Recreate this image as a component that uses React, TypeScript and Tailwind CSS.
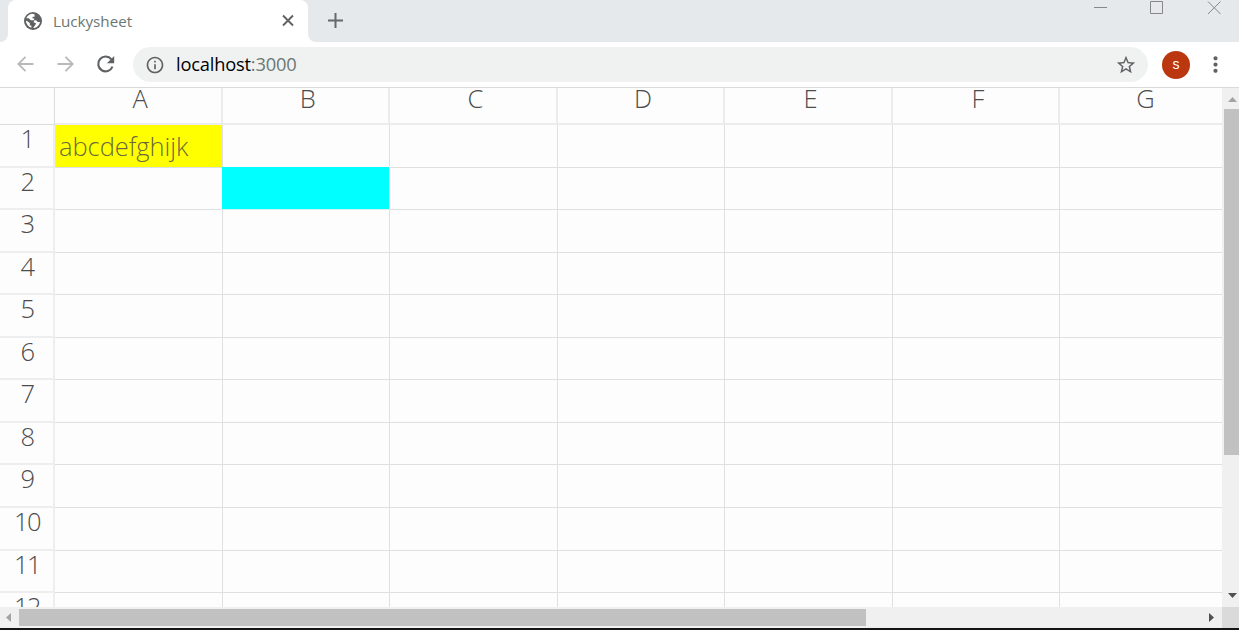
import { MdInfoOutline, MdMoreVert, MdStarBorder } from 'react-icons/md';

const columns = ['A', 'B', 'C', 'D', 'E', 'F', 'G'];
const rowHeights = [43, 42, 43, 42, 43, 42, 43, 42, 43, 43, 42, 43];
const cells: Record<string, { text?: string; className: string }> = {
  A1: { text: 'abcdefghijk', className: 'w-[167.55px] border-[#e0e0e0] bg-[#ffff00] text-[#4c4c4c]/85' },
  B2: { className: '-ml-px -mt-px w-[168.55px] border-[#d0f4f4] bg-[#00ffff]' }
};

const TitleBar = () => (
  <div className="flex h-[42px] shrink-0 justify-between bg-[#e5e9ec]">
    <div className="flex">
      <div className="w-2 bg-white">
        <div className="h-full rounded-br-lg bg-[#e5e9ec]" />
      </div>
      <div className="flex w-[300px] items-center rounded-t-lg bg-white pl-4 pr-[13px]">
        <svg className="size-[18px]" viewBox="0 0 18 18">
          <circle cx="9" cy="9" r="9" fill="#5f6163" />
          <path
            d="M7.200 1.900C5 2.400 3.100 4 2.300 6.300h2.500l2 2h3.400V6.500h-1.600V4.800h2V2.400c-1-.5-2.200-.7-3.400-.5z"
            fill="#fff"
          />
          <path
            d="M1.900 8.800c.2 3.200 2.500 6 5.500 6.900v-2.200H5.800v-2.600L2.900 8.900zM10.500 8.300l2 .2 1.200 1.500h2.300c-.4 3-2.600 5.300-5.500 5.900l-1.300-.3 1.600-1.800 1.300-2.200-2.500-1.300z"
            fill="#fff"
          />
        </svg>
        <span className="ml-[11px] flex-1 text-[15.2px] text-[#6b7773]">Luckysheet</span>
        <svg className="size-[14px]" viewBox="0 0 14 14" stroke="#5f6163" strokeWidth="1.9">
          <path d="M2 1.500l10 10M12 1.500L2 11.500" />
        </svg>
      </div>
      <div className="w-2 bg-white">
        <div className="h-full rounded-bl-lg bg-[#e5e9ec]" />
      </div>
      <svg className="ml-[11px] mt-[12px] size-[17px]" viewBox="0 0 17 17" stroke="#66696b" strokeWidth="2">
        <path d="M1 8.5h15M8.5 1v15" />
      </svg>
    </div>
    <div className="flex pr-[17px] pt-px">
      <svg className="size-[15px]" viewBox="0 0 15 15" stroke="#858789">
        <path d="M1 6.5h13" />
      </svg>
      <svg className="ml-[41px] size-[14px]" viewBox="0 0 14 14" fill="none" stroke="#858789">
        <path d="M1.5.5h12v12h-12z" />
      </svg>
      <svg className="ml-[44px] size-[15px]" viewBox="0 0 15 15" stroke="#858789">
        <path d="M1 .5l12.500 12.500M13.500 .5L1 13" />
      </svg>
    </div>
  </div>
);

const AddressBar = () => (
  <div className="flex h-[45px] shrink-0 items-center bg-white pl-[17px] text-[#5f6163]">
    <svg className="size-[17px]" viewBox="0 0 17 17" fill="none" stroke="#b9b9b9" strokeWidth="1.800">
      <path d="M16.500 8H1.500M8.500 .8L1.300 8l7.200 7.200" />
    </svg>
    <svg className="ml-[23px] size-[17px]" viewBox="0 0 17 17" fill="none" stroke="#b9b9b9" strokeWidth="1.800">
      <path d="M.5 8h15M8.500 .8L15.700 8l-7.200 7.200" />
    </svg>
    <svg className="ml-[22px] size-[19px]" viewBox="0 0 19 19">
      <path d="M15.400 4.300A7.400 7.400 0 1 0 16.500 11.700" fill="none" stroke="#5f6163" strokeWidth="2.100" />
      <path d="M18.200 1v7.300h-7.300z" fill="#5f6163" />
    </svg>
    <div className="ml-[18px] flex h-[35px] flex-1 items-center rounded-full bg-[#f0f2f2] pl-[12px] pr-[11px]">
      <MdInfoOutline className="size-[20px]" />
      <span className="ml-[11px] flex-1 pb-[2px] text-[18.3px] tracking-[-0.2px] text-black">
        localhost<span className="text-[#6b7773]">:3000</span>
      </span>
      <MdStarBorder className="size-[22px]" />
    </div>
    <div className="ml-[14px] flex size-[28px] items-center justify-center rounded-full bg-[#ba370f] font-['Liberation_Sans'] text-[14px] text-white">
      s
    </div>
    <MdMoreVert className="ml-[13px] mr-[11px] size-[25px]" />
  </div>
);

const Sheet = () => (
  <div className="flex-1 overflow-hidden bg-[#fdfdfd] text-[25.5px] font-light text-[#4c4c4c]">
    <div className="flex h-[37px] w-[1230px]">
      <div className="w-[55px] shrink-0 border-b border-r border-[#dcdcdc]" />
      {columns.map((col) => (
        <div key={col} className="flex w-[167.55px] shrink-0 justify-center border-b-2 border-r-2 border-[#ececec] leading-[21px]">
          <span className="ml-[5px]">{col}</span>
        </div>
      ))}
    </div>
    {rowHeights.map((height, i) => (
      <div key={i} className="flex w-[1230px]" style={{ height }}>
        <div className="w-[55px] shrink-0 border-b-2 border-r-2 border-[#eeeeee] pl-px text-center leading-[27px] tracking-[-1.5px]">
          {i + 1}
        </div>
        {columns.map((col) => {
          const cell = cells[`${col}${i + 1}`];
          return (
            <div
              key={col}
              className={`shrink-0 border-b border-r pl-1 leading-[43px] tracking-[-0.05px] ${cell ? cell.className : 'w-[167.55px] border-[#e0e0e0]'}`}
            >
              {cell?.text}
            </div>
          );
        })}
      </div>
    ))}
  </div>
);

const App = () => {
  return (
    <div className="flex h-[630px] w-[1239px] flex-col overflow-hidden border-b-2 border-[#151314] bg-white font-['Open_Sans',sans-serif]">
      <TitleBar />
      <AddressBar />
      <div className="flex min-h-0 flex-1 border-t border-[#dadada]">
        <Sheet />
        <div className="flex w-[17px] shrink-0 flex-col items-center bg-[#f0f0f0]">
          <svg className="ml-[3px] mt-[9px] h-[5px] w-[9px]" viewBox="0 0 9 5" fill="#a3a3a3">
            <path d="M0 5l4.5-5L9 5z" />
          </svg>
          <div className="mt-[7px] h-[346px] w-[15px] self-end bg-[#c1c1c1]" />
          <svg className="mb-[9px] ml-[3px] mt-auto h-[5px] w-[9px]" viewBox="0 0 9 5" fill="#505050">
            <path d="M0 0h9L4.500 5z" />
          </svg>
        </div>
      </div>
      <div className="flex h-[21px] shrink-0 items-center bg-[#f0f0f0] pl-[6px]">
        <svg className="h-[9px] w-[5px]" viewBox="0 0 5 9" fill="#a3a3a3">
          <path d="M5 0v9L0 4.500z" />
        </svg>
        <div className="ml-[8px] h-[17px] w-[847px] bg-[#c1c1c1]" />
        <svg className="ml-auto mr-[8px] h-[9px] w-[5px]" viewBox="0 0 5 9" fill="#505050">
          <path d="M0 0l5 4.500L0 9z" />
        </svg>
        <div className="h-full w-[17px] bg-[#dadada]" />
      </div>
    </div>
  );
};

export default App;
